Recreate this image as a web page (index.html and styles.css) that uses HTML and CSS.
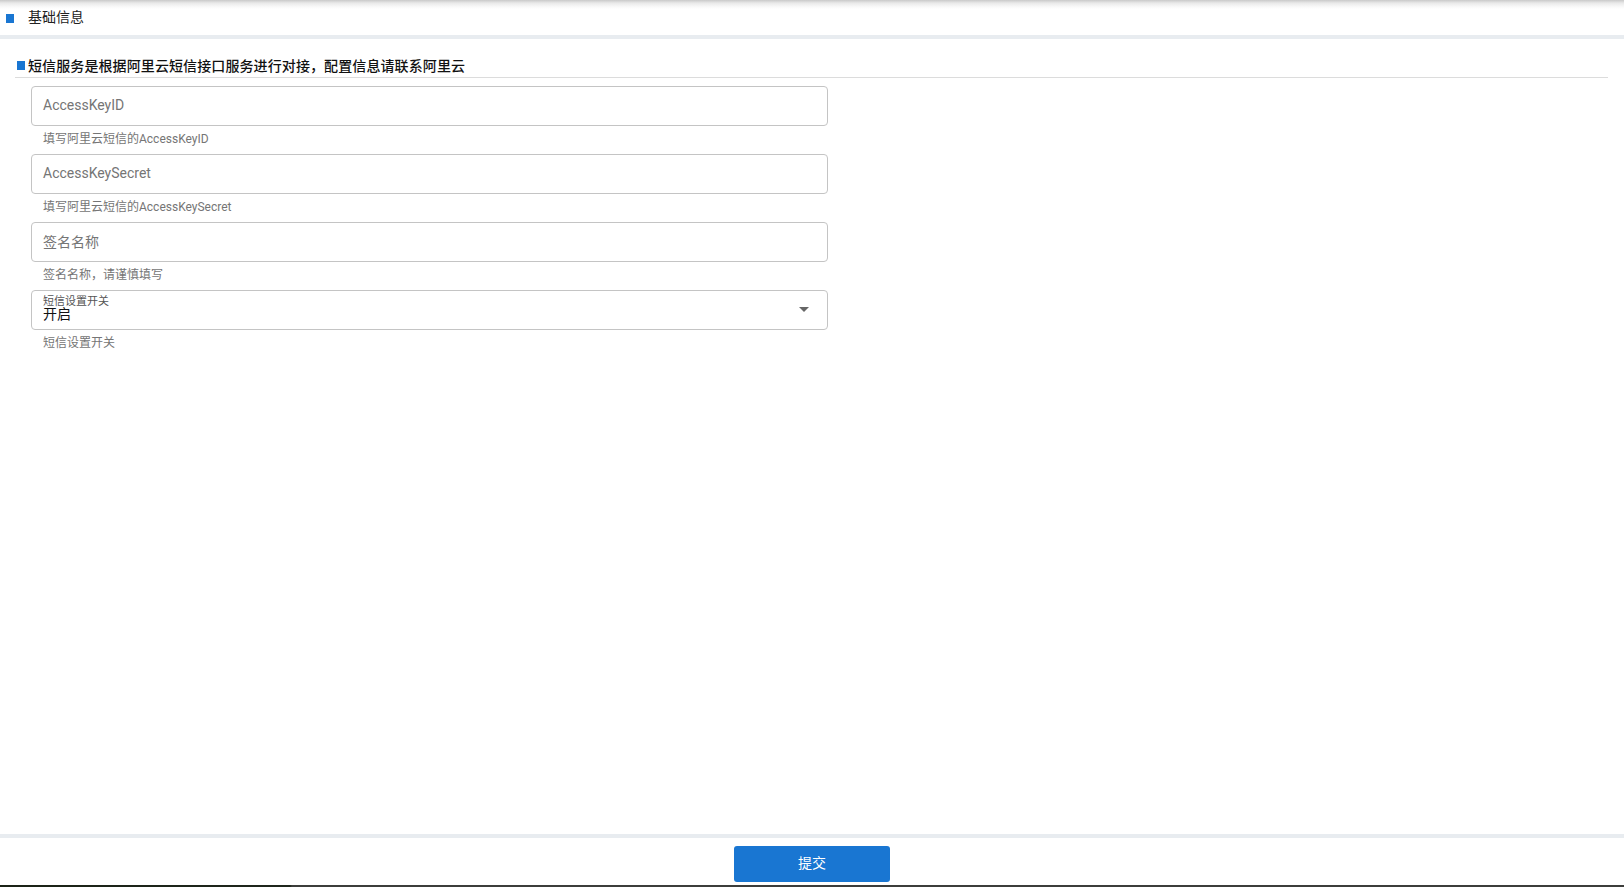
FILE: index.html
```html
<!DOCTYPE html>
<html lang="zh-CN">
<head>
<meta charset="utf-8">
<title>基础信息</title>
<link rel="stylesheet" href="styles.css">
</head>
<body>
<div class="page">
  <header class="topbar">
    <span class="mark mark-top"></span>
    <span class="topbar-title">基础信息</span>
  </header>
  <div class="band"></div>
  <main class="main">
    <div class="section-head">
      <span class="mark"></span>
      <span class="section-title">短信服务是根据阿里云短信接口服务进行对接，配置信息请联系阿里云</span>
    </div>
    <form class="form">
      <div class="field">
        <div class="box"><span class="placeholder">AccessKeyID</span></div>
        <div class="helper">填写阿里云短信的AccessKeyID</div>
      </div>
      <div class="field">
        <div class="box"><span class="placeholder">AccessKeySecret</span></div>
        <div class="helper">填写阿里云短信的AccessKeySecret</div>
      </div>
      <div class="field">
        <div class="box"><span class="placeholder">签名名称</span></div>
        <div class="helper">签名名称，请谨慎填写</div>
      </div>
      <div class="field">
        <div class="box select">
          <div class="select-text">
            <span class="select-label">短信设置开关</span>
            <span class="select-value">开启</span>
          </div>
          <span class="arrow"></span>
        </div>
        <div class="helper">短信设置开关</div>
      </div>
    </form>
  </main>
  <footer class="footer">
    <div class="footer-inner">
      <button type="button" class="submit">提交</button>
    </div>
    <div class="edge"></div>
  </footer>
</div>
</body>
</html>
```

FILE: styles.css
```css
* { box-sizing: border-box; }
html, body { margin: 0; padding: 0; }
body {
  font-family: Roboto, "Noto Sans CJK SC", sans-serif;
  color: #222;
  background: #fff;
}
.page {
  display: flex;
  flex-direction: column;
  height: 100vh;
  overflow: hidden;
}
.topbar {
  height: 35px;
  display: flex;
  align-items: center;
  padding-left: 6px;
  padding-bottom: 3px;
  background: linear-gradient(to bottom, #c9c9c9 0px, #e9e9e9 3px, #fafafa 7px, #fff 9px);
}
.mark {
  display: inline-block;
  width: 8px;
  height: 9px;
  background: #1976d2;
  flex: none;
}
.mark-top { margin-top: 4px; }
.topbar-title {
  margin-left: 14px;
  font-size: 14px;
  color: #222;
}
.band {
  height: 4px;
  background: #e8ecf0;
}
.main {
  flex: 1;
  padding: 16px 16px 0 15px;
}
.section-head {
  display: flex;
  align-items: center;
  height: 23px;
  padding-left: 2px;
  border-bottom: 1px solid #dcdcdc;
  padding-bottom: 3px;
}
.section-head .mark { margin-top: 1px; }
.section-title {
  margin-left: 3px;
  font-size: 14px;
  font-weight: 500;
  color: #111;
  letter-spacing: 0.1px;
}
.form {
  padding: 8px 0 0 16px;
  width: 813px;
}
.field {
  display: flex;
  flex-direction: column;
}
.box {
  height: 40px;
  border: 1px solid #c4c4c4;
  border-radius: 4px;
  display: flex;
  align-items: center;
  padding: 0 11px 3px;
  font-size: 14px;
}
.placeholder { color: #757575; }
.helper {
  padding: 3px 0 5px 12px;
  line-height: 20px;
  font-size: 12px;
  color: #757575;
}
.select {
  justify-content: space-between;
  padding: 0 18px 0 11px;
}
.select-text {
  align-self: flex-start;
  display: flex;
  flex-direction: column;
  padding-top: 5px;
}
.select-label {
  font-size: 11px;
  line-height: 12px;
  color: #555;
}
.select-value {
  font-size: 14px;
  line-height: 16px;
  margin-top: -2px;
  color: #111;
}
.arrow {
  width: 0;
  height: 0;
  border-left: 5px solid transparent;
  border-right: 5px solid transparent;
  border-top: 5px solid #666;
  margin-top: -1px;
}
.footer {
  border-top: 4px solid #e8ecf0;
}
.footer-inner {
  display: flex;
  justify-content: center;
  padding: 8px 0 3px;
}
.submit {
  width: 156px;
  height: 36px;
  border: none;
  border-radius: 3px;
  background: #1976d2;
  color: #fff;
  font-family: Roboto, "Noto Sans CJK SC", sans-serif;
  font-size: 14px;
  padding: 0 0 5px;
}
.edge {
  height: 2px;
  background: linear-gradient(to right, #1b2317 0, #1f261c 290px, #3c3d3b 292px, #3c3d3b 100%);
}
```
